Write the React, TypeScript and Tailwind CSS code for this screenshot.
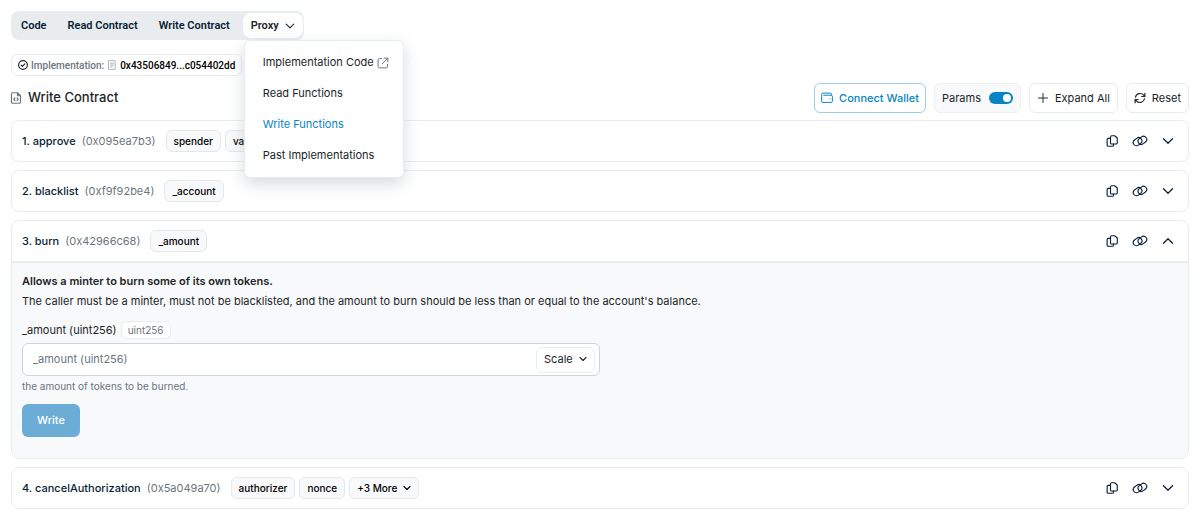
import { ReactNode, useState } from 'react';

interface Fn { id: number; name: string; selector: string; params: string[]; more?: number }

const FUNCTIONS: Fn[] = [
  { id: 1, name: 'approve', selector: '0x095ea7b3', params: ['spender', 'value'] },
  { id: 2, name: 'blacklist', selector: '0xf9f92be4', params: ['_account'] },
  { id: 3, name: 'burn', selector: '0x42966c68', params: ['_amount'] },
  { id: 4, name: 'cancelAuthorization', selector: '0x5a049a70', params: ['authorizer', 'nonce'], more: 3 },
];

const TABS = ['Code', 'Read Contract', 'Write Contract'];

function Icon({ className, stroke = 1.3, children }: { className: string; stroke?: number; children: ReactNode }) {
  return (
    <svg viewBox="0 0 16 16" className={`shrink-0 ${className}`} fill="none" stroke="currentColor" strokeWidth={stroke} strokeLinecap="round" strokeLinejoin="round" aria-hidden="true">
      {children}
    </svg>
  );
}

function Chevron({ className, up = false, stroke = 1.6 }: { className: string; up?: boolean; stroke?: number }) {
  return (
    <Icon className={className} stroke={stroke}>
      <path d={up ? 'M2 11l6-6 6 6' : 'M2 5l6 6 6-6'} />
    </Icon>
  );
}

function CopyIcon() {
  return (
    <Icon className="size-3" stroke={1.5}>
      <path d="M7.500 1h4L15 4v6.500a1.500 1.500 0 0 1-1.500 1.500h-6A1.500 1.500 0 0 1 6 10.500v-8A1.500 1.500 0 0 1 7.500 1z" />
      <path d="M6 4.500H3A1.500 1.500 0 0 0 1.500 6v7.500A1.500 1.500 0 0 0 3 15h5.500a1.500 1.500 0 0 0 1.500-1.500V12" />
    </Icon>
  );
}

function LinkIcon() {
  return (
    <Icon className="size-4" stroke={1.1}>
      <rect x="1" y="5.500" width="9.200" height="6.400" rx="3.200" transform="rotate(-38 5.600 8.700)" />
      <rect x="5.800" y="4.100" width="9.200" height="6.400" rx="3.200" transform="rotate(-38 10.400 7.300)" />
    </Icon>
  );
}

function ProxyMenu() {
  return (
    <div className="absolute left-0 top-full z-10 mt-0.5 ml-px flex w-40 flex-col rounded-md border border-[#e9ecef] bg-white py-1.5 font-['Inter',sans-serif] text-[11px] leading-[17px] font-normal text-[#212529] shadow-[0_6px_16px_rgba(140,152,164,0.35)]">
      <a href="#code" className="flex items-center gap-[3px] px-[18px] py-[7px] whitespace-nowrap">
        Implementation Code
        <Icon className="size-3 text-[#6c757d]">
          <path d="M6 2H3a1.500 1.500 0 0 0-1.500 1.500V13A1.500 1.500 0 0 0 3 14.500h9.500A1.500 1.500 0 0 0 14 13v-3M9.500 1.500h5v5M14.500 1.500L7 9" />
        </Icon>
      </a>
      <a href="#read" className="px-[18px] py-[7px]">Read Functions</a>
      <a href="#write" className="px-[18px] py-[7px] text-[#0784c3]">Write Functions</a>
      <a href="#past" className="px-[18px] py-[7px]">Past Implementations</a>
    </div>
  );
}

function Tabs() {
  const [open, setOpen] = useState(true);
  return (
    <nav className="flex w-fit items-center rounded-lg bg-[#e9ecef] p-0.5 pr-px font-['Roboto',sans-serif] text-[11px] leading-[17px] font-semibold text-[#081d35]">
      {TABS.map(t => (
        <button key={t} className="mr-[5px] px-2 py-1">{t}</button>
      ))}
      <div className="relative">
        <button onClick={() => setOpen(!open)} className="flex items-center gap-1.5 rounded-lg bg-white px-2 py-1 text-[#212529]">
          Proxy
          <Chevron className="size-2.5" stroke={1.8} />
        </button>
        {open && <ProxyMenu />}
      </div>
    </nav>
  );
}

function Implementation() {
  return (
    <div className="mt-3.5 flex gap-1 font-['Roboto',sans-serif]">
      <div className="flex h-[22px] items-center gap-[3px] rounded-md border border-[#e9ecef] px-1.5 text-[10px]">
        <Icon className="size-2.5 text-[#212529]" stroke={1.8}>
          <circle cx="8" cy="8" r="7" />
          <path d="M5 8.200l2 2 4-4" />
        </Icon>
        <span className="font-medium text-[#6c757d]">Implementation:</span>
        <Icon className="size-2.5 text-[#adb5bd]" stroke={1.6}>
          <path d="M3 1h10v14H3zM5.500 5h5M5.500 8h5M5.500 11h3" />
        </Icon>
        <a href="#implementation" className="font-medium text-black">0x43506849...c054402dd</a>
      </div>
      <div className="h-[22px] w-24 rounded-md border border-[#e9ecef]" />
    </div>
  );
}

function Toolbar() {
  return (
    <div className="mt-[7px] flex items-center justify-between">
      <h1 className="flex items-center gap-1.5 text-[13px] font-medium text-[#212529]">
        <Icon className="-ml-px size-3 text-[#6c757d]" stroke={1.6}>
          <path d="M3.500 1H10l4 4v8.500a1.500 1.500 0 0 1-1.500 1.500h-9A1.500 1.500 0 0 1 2 13.500v-11A1.500 1.500 0 0 1 3.500 1zM10 1v4h4M6.500 8L5 9.800l1.500 1.800M9.500 8L11 9.800l-1.500 1.800" />
        </Icon>
        Write Contract
      </h1>
      <div className="flex items-center gap-2 text-[11px] text-[#212529]">
        <button className="flex h-[30px] items-center gap-1.5 rounded-md border border-[#9ccee7] px-1.5 font-medium text-[#0784c3]">
          <Icon className="size-3">
            <path d="M14 3.500V3a1.500 1.500 0 0 0-1.500-1.500h-10A1.700 1.700 0 0 0 .8 3.200v9a1.700 1.700 0 0 0 1.700 1.700h11a1.700 1.700 0 0 0 1.700-1.700V6A1.700 1.700 0 0 0 13.500 4.300H3.500M11.800 9.100h.2" />
          </Icon>
          Connect Wallet
        </button>
        <label className="flex h-[30px] items-center gap-2 rounded-md border border-[#eef0f2] bg-[#f8f9fa] px-[7px]">
          Params
          <input type="checkbox" defaultChecked className="peer sr-only" />
          <span className="flex h-3 w-6 justify-end rounded-full bg-[#0784c3] p-0.5">
            <span className="size-2 rounded-full bg-white" />
          </span>
        </label>
        <button className="flex h-[30px] items-center gap-1.5 rounded-md border border-[#e9ecef] px-[7px]">
          <Icon className="size-3"><path d="M8 2v12M2 8h12" /></Icon>
          Expand All
        </button>
        <button className="flex h-[30px] items-center gap-1.5 rounded-md border border-[#e9ecef] px-[7px]">
          <Icon className="size-3" stroke={1.6}>
            <path d="M2 7a6.200 6.200 0 0 1 10.800-2.800L14.500 6M14.500 1.800V6h-4.200M14 9a6.200 6.200 0 0 1-10.800 2.800L1.500 10M1.500 14.200V10h4.200" />
          </Icon>
          Reset
        </button>
      </div>
    </div>
  );
}

function BurnForm() {
  return (
    <div className="rounded-b-md border-t-2 border-[#e9ecef] bg-[#f8f9fa] px-2.5 pt-2.5 pb-[21px] text-[11px] text-[#212529]">
      <p className="leading-4 font-semibold">Allows a minter to burn some of its own tokens.</p>
      <p className="mt-1 leading-4">The caller must be a minter, must not be blacklisted, and the amount to burn should be less than or equal to the account's balance.</p>
      <div className="mt-3 flex items-center gap-1">
        <label htmlFor="amount">_amount (uint256)</label>
        <span className="rounded-md border border-[#e9ecef] bg-white px-1.5 text-[10px] leading-4 text-[#6c757d]">uint256</span>
      </div>
      <div className="mt-1 flex h-[33px] w-1/2 items-center rounded-md border border-[#ced4da] bg-white pr-1">
        <input id="amount" placeholder="_amount (uint256)" className="min-w-0 flex-1 px-2.5 outline-none placeholder:text-[#6c757d]" />
        <div className="relative">
          <select aria-label="Scale" className="h-[26px] w-[59px] appearance-none rounded-md border border-[#e9ecef] bg-white pl-[7px]">
            <option>Scale</option>
          </select>
          <Chevron className="pointer-events-none absolute right-2 top-2 size-2" stroke={2.2} />
        </div>
      </div>
      <p className="mt-0.5 text-[10px] leading-4 text-[#6c757d]">the amount of tokens to be burned.</p>
      <button className="mt-2.5 h-[33px] rounded-md bg-[#6cadd7] px-[15px] font-medium text-white">Write</button>
    </div>
  );
}

function FunctionCard({ fn }: { fn: Fn }) {
  const [open, setOpen] = useState(fn.id === 3);
  return (
    <section className="rounded-lg border border-[#e9ecef] bg-white">
      <div className="flex h-10 items-center justify-between pr-3.5 pl-2.5 text-[#081d35]">
        <div className="flex items-center gap-1">
          <h2 className="mr-1.5 flex gap-[6px] text-[11px] font-medium">
            {fn.id}. {fn.name}
            <span className="font-normal text-[#6c757d]">({fn.selector})</span>
          </h2>
          {fn.params.map(p => (
            <span key={p} className="rounded-md border border-gray-200 bg-[#f8f9fa] px-[7px] text-[10px] leading-5 font-medium text-black">{p}</span>
          ))}
          {fn.more && (
            <button className="flex items-center gap-1.5 rounded-md border border-gray-200 bg-[#f8f9fa] px-[7px] text-[10px] leading-5 font-medium text-black">
              +{fn.more} More
              <Chevron className="size-2" stroke={2.2} />
            </button>
          )}
        </div>
        <div className="flex items-center gap-3.5">
          <button aria-label="Copy"><CopyIcon /></button>
          <button aria-label="Permalink"><LinkIcon /></button>
          <button aria-label="Toggle" onClick={() => setOpen(!open)}><Chevron className="size-3" up={open} /></button>
        </div>
      </div>
      {open && fn.id === 3 && <BurnForm />}
    </section>
  );
}

export default function App() {
  return (
    <main className="min-h-screen bg-white p-[11px] pb-1 font-['Inter',sans-serif]">
      <Tabs />
      <Implementation />
      <Toolbar />
      <div className="mt-[7px] flex flex-col gap-2">
        {FUNCTIONS.map(fn => <FunctionCard key={fn.id} fn={fn} />)}
      </div>
    </main>
  );
}
